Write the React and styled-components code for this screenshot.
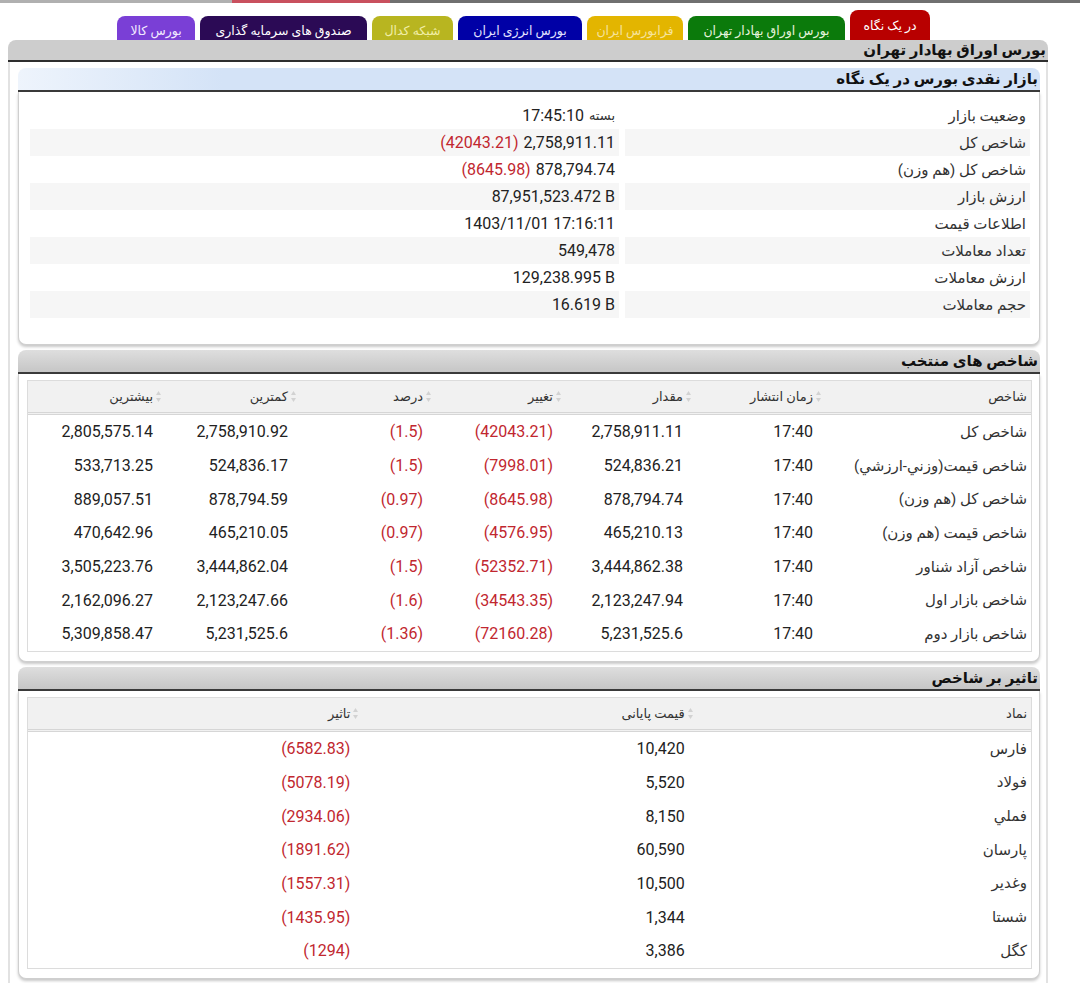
import React from "react";
import styled, { createGlobalStyle } from "styled-components";

const GlobalStyle = createGlobalStyle`
  body {
    margin: 0;
    background: #fff;
    font-family: Roboto, "DejaVu Sans", sans-serif;
    color: #222;
  }
`;

const Page = styled.div`
  direction: rtl;
  width: 1080px;
`;

const TopStrip = styled.div`
  height: 3px;
  background: linear-gradient(
    to right,
    #b0b0b0 0,
    #b0b0b0 232px,
    #c9505e 232px,
    #c9505e 390px,
    #707070 390px,
    #707070 100%
  );
`;

const TabBar = styled.div`
  display: flex;
  align-items: flex-end;
  gap: 5px;
  height: 30px;
  margin-top: 7px;
  padding-right: 150px;
`;

const Tab = styled.div`
  width: ${(p) => p.$w}px;
  height: ${(p) => (p.$active ? 30 : 24)}px;
  box-sizing: border-box;
  padding-top: ${(p) => (p.$active ? 0 : 4)}px;
  background: ${(p) => p.$bg};
  color: ${(p) => p.$fg};
  border-radius: 8px 8px 0 0;
  font-size: 12.5px;
  display: flex;
  align-items: center;
  justify-content: center;
  white-space: nowrap;
`;

const SiteHeader = styled.div`
  margin: 0 32px 0 8px;
  height: 20px;
  line-height: 20px;
  padding-right: 2px;
  background: #cdcdcd;
  border-bottom: 2px solid #2e2e2e;
  border-radius: 8px 8px 0 0;
  font-weight: bold;
  font-size: 15px;
  color: #111;
`;

const Panel = styled.div`
  margin: 0 32px 0 8px;
  border-left: 2px solid #e2e2e2;
  border-right: 2px solid #e2e2e2;
  padding: 6px 6px 8px 8px;
  display: flex;
  flex-direction: column;
  gap: 5px;
`;

const Card = styled.section``;

const CardHeader = styled.div`
  height: 22px;
  line-height: 22px;
  padding-right: 2px;
  border-bottom: 2px solid #3a3a3a;
  border-radius: 8px 8px 0 0;
  background: ${(p) =>
    p.$blue
      ? "linear-gradient(to right, #eef4fc, #d4e3f7 20%, #d4e3f7)"
      : "linear-gradient(to bottom, #dedede, #c6c6c6)"};
  font-weight: bold;
  font-size: 15px;
  color: #111;
`;

const CardBody = styled.div`
  border: 1px solid #cfcfcf;
  border-top: none;
  border-radius: 0 0 8px 8px;
  box-shadow: 0 2px 3px rgba(0, 0, 0, 0.22);
  background: #fff;
`;

const InfoBody = styled(CardBody)`
  padding: 10px 9px 26px 11px;
`;

const TableBody = styled(CardBody)`
  padding: 6px 7px 9px 8px;
`;

const InfoRow = styled.div`
  display: grid;
  grid-template-columns: 405px 1fr;
  column-gap: 6px;
  height: 27px;
`;

const InfoCell = styled.div`
  display: flex;
  align-items: center;
  gap: 5px;
  padding: 0 4px;
  font-size: 16px;
  background: ${(p) => (p.$shade ? "#f6f6f6" : "transparent")};
`;

const Label = styled.span`
  font-size: 15px;
  color: #333;
`;

const Small = styled.span`
  font-size: 13px;
  color: #333;
`;

const Num = styled.span`
  direction: ltr;
  unicode-bidi: isolate;
  color: ${(p) => (p.$neg ? "#c1272f" : "#222")};
`;

const TableBox = styled.div`
  border: 1px solid #dcdcdc;
`;

const HeadRow = styled.div`
  display: grid;
  grid-template-columns: ${(p) => p.$cols};
  height: 31px;
  background: #f1f1f1;
  border-bottom: 3px double #d6d6d6;
`;

const HeadCell = styled.div`
  display: flex;
  align-items: center;
  gap: 3px;
  padding-right: 4px;
  font-size: 13px;
  color: #333;
`;

const BodyRow = styled.div`
  display: grid;
  grid-template-columns: ${(p) => p.$cols};
  height: 33.7px;
`;

const DataCell = styled.div`
  display: flex;
  align-items: center;
  padding-right: ${(p) => (p.$first ? 4 : 12)}px;
  font-size: 16px;
`;

const SortIcon = () => (
  <svg width="5" height="11" viewBox="0 0 5 11">
    <path d="M2.5 0L5 4H0Z M2.5 11L0 7H5Z" fill="#d2d2d2" />
  </svg>
);

const tabs = [
  { t: "در یک نگاه", w: 80, bg: "#b80000", fg: "#fff", active: true },
  { t: "بورس اوراق بهادار تهران", w: 157, bg: "#0b7a0b", fg: "#e6f3dc" },
  { t: "فرابورس ایران", w: 96, bg: "#e3b500", fg: "#f6e39c" },
  { t: "بورس انرژی ایران", w: 124, bg: "#0000a6", fg: "#e2e2ff" },
  { t: "شبکه کدال", w: 81, bg: "#b8b520", fg: "#f1eea6" },
  { t: "صندوق های سرمایه گذاری", w: 167, bg: "#2b0a55", fg: "#fff" },
  { t: "بورس کالا", w: 78, bg: "#7a3fd6", fg: "#f2eaff" },
];

const info = [
  { label: "وضعیت بازار", value: <><Small>بسته</Small><Num>17:45:10</Num></> },
  { label: "شاخص کل", value: <><Num>2,758,911.11</Num><Num $neg>(42043.21)</Num></> },
  { label: "شاخص کل (هم وزن)", value: <><Num>878,794.74</Num><Num $neg>(8645.98)</Num></> },
  { label: "ارزش بازار", value: <Num>87,951,523.472 B</Num> },
  { label: "اطلاعات قیمت", value: <Num>1403/11/01 17:16:11</Num> },
  { label: "تعداد معاملات", value: <Num>549,478</Num> },
  { label: "ارزش معاملات", value: <Num>129,238.995 B</Num> },
  { label: "حجم معاملات", value: <Num>16.619 B</Num> },
];

const indexCols = "206px 130px 130px 130px 135px 135px 1fr";
const indexHead = ["شاخص", "زمان انتشار", "مقدار", "تغییر", "درصد", "کمترین", "بیشترین"];
const indexRows = [
  ["شاخص کل", "17:40", "2,758,911.11", "(42043.21)", "(1.5)", "2,758,910.92", "2,805,575.14"],
  ["شاخص قیمت(وزني-ارزشي)", "17:40", "524,836.21", "(7998.01)", "(1.5)", "524,836.17", "533,713.25"],
  ["شاخص کل (هم وزن)", "17:40", "878,794.74", "(8645.98)", "(0.97)", "878,794.59", "889,057.51"],
  ["شاخص قیمت (هم وزن)", "17:40", "465,210.13", "(4576.95)", "(0.97)", "465,210.05", "470,642.96"],
  ["شاخص آزاد شناور", "17:40", "3,444,862.38", "(52352.71)", "(1.5)", "3,444,862.04", "3,505,223.76"],
  ["شاخص بازار اول", "17:40", "2,123,247.94", "(34543.35)", "(1.6)", "2,123,247.66", "2,162,096.27"],
  ["شاخص بازار دوم", "17:40", "5,231,525.6", "(72160.28)", "(1.36)", "5,231,525.6", "5,309,858.47"],
];

const impactCols = "1fr 1fr 1fr";
const impactHead = ["نماد", "قیمت پایانی", "تاثیر"];
const impactRows = [
  ["فارس", "10,420", "(6582.83)"],
  ["فولاد", "5,520", "(5078.19)"],
  ["فملي", "8,150", "(2934.06)"],
  ["پارسان", "60,590", "(1891.62)"],
  ["وغدير", "10,500", "(1557.31)"],
  ["شستا", "1,344", "(1435.95)"],
  ["کگل", "3,386", "(1294)"],
];

function DataTable({ cols, head, rows }) {
  return (
    <TableBox>
      <HeadRow $cols={cols}>
        {head.map((h, i) => (
          <HeadCell key={h}>
            {i > 0 && <SortIcon />}
            {h}
          </HeadCell>
        ))}
      </HeadRow>
      {rows.map((r) => (
        <BodyRow key={r[0]} $cols={cols}>
          {r.map((c, i) =>
            i === 0 ? (
              <DataCell key={i} $first>
                <Label>{c}</Label>
              </DataCell>
            ) : (
              <DataCell key={i}>
                <Num $neg={c.startsWith("(")}>{c}</Num>
              </DataCell>
            )
          )}
        </BodyRow>
      ))}
    </TableBox>
  );
}

export default function App() {
  return (
    <Page>
      <GlobalStyle />
      <TopStrip />
      <TabBar>
        {tabs.map((t) => (
          <Tab key={t.t} $w={t.w} $bg={t.bg} $fg={t.fg} $active={t.active}>
            {t.t}
          </Tab>
        ))}
      </TabBar>
      <SiteHeader>بورس اوراق بهادار تهران</SiteHeader>
      <Panel>
        <Card>
          <CardHeader $blue>بازار نقدی بورس در یک نگاه</CardHeader>
          <InfoBody>
            {info.map((row, i) => (
              <InfoRow key={row.label}>
                <InfoCell $shade={i % 2 === 1}>
                  <Label>{row.label}</Label>
                </InfoCell>
                <InfoCell $shade={i % 2 === 1}>{row.value}</InfoCell>
              </InfoRow>
            ))}
          </InfoBody>
        </Card>
        <Card>
          <CardHeader>شاخص های منتخب</CardHeader>
          <TableBody>
            <DataTable cols={indexCols} head={indexHead} rows={indexRows} />
          </TableBody>
        </Card>
        <Card>
          <CardHeader>تاثیر بر شاخص</CardHeader>
          <TableBody>
            <DataTable cols={impactCols} head={impactHead} rows={impactRows} />
          </TableBody>
        </Card>
      </Panel>
    </Page>
  );
}
